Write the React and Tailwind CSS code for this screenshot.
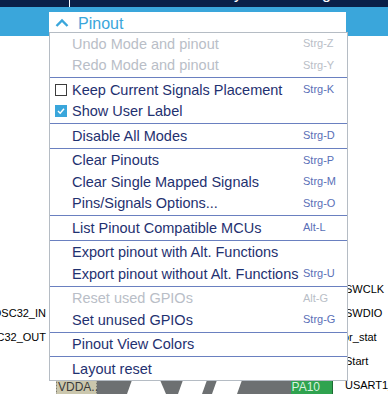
import React from 'react';

const items = [
    { label: 'Undo Mode and pinout', key: 'Strg-Z', disabled: true },
    { label: 'Redo Mode and pinout', key: 'Strg-Y', disabled: true },
    'sep',
    { label: 'Keep Current Signals Placement', key: 'Strg-K', check: 'off' },
    { label: 'Show User Label', check: 'on' },
    'sep',
    { label: 'Disable All Modes', key: 'Strg-D' },
    'sep',
    { label: 'Clear Pinouts', key: 'Strg-P' },
    { label: 'Clear Single Mapped Signals', key: 'Strg-M' },
    { label: 'Pins/Signals Options...', key: 'Strg-O' },
    'sep',
    { label: 'List Pinout Compatible MCUs', key: 'Alt-L' },
    'sep',
    { label: 'Export pinout with Alt. Functions' },
    { label: 'Export pinout without Alt. Functions', key: 'Strg-U' },
    'sep',
    { label: 'Reset used GPIOs', key: 'Alt-G', disabled: true },
    { label: 'Set unused GPIOs', key: 'Strg-G' },
    'sep',
    { label: 'Pinout View Colors' },
    'sep',
    { label: 'Layout reset' },
];

const CheckBox = ({ on }) =>
    on ? (
        <span className="flex h-[12px] w-[12px] items-center justify-center bg-[#3aa6db]">
            <svg width="10" height="10" viewBox="0 0 10 10">
                <polyline points="2,5 4.2,7.3 8,2.8" fill="none" stroke="#ffffff" strokeWidth="1.4" />
            </svg>
        </span>
    ) : (
        <span className="block h-[12px] w-[12px] border border-[#3c3c3c] bg-white"></span>
    );

const MenuRow = ({ item }) => (
    <div className="flex h-[21.5px] items-center pl-[5px]">
        <div className="flex w-[17px] shrink-0 items-center">
            {item.check && <CheckBox on={item.check === 'on'} />}
        </div>
        <div
            className={`w-[231px] shrink-0 whitespace-nowrap text-[14.5px] leading-none ${
                item.disabled ? 'text-[#b9bec7]' : 'text-[#1f3170]'
            }`}
        >
            {item.label}
        </div>
        {item.key && (
            <div
                className={`whitespace-nowrap text-[11px] leading-none ${
                    item.disabled ? 'text-[#b9bec7]' : 'text-[#5a6fb7]'
                }`}
            >
                {item.key}
            </div>
        )}
    </div>
);

const App = () => {
    return (
        <div className="relative h-[394px] w-[388px] overflow-hidden bg-white font-['Liberation_Sans',Arial,sans-serif]">
            {/* Top navy bar with clipped title glyphs */}
            <div className="relative h-[7px] overflow-hidden bg-[#0a2048]">
                <div className="absolute left-[69px] top-0 h-[7px] w-[1px] bg-white"></div>
                <span className="absolute left-[234px] top-[-14px] text-[16px] leading-none text-white">y</span>
                <span className="absolute left-[322px] top-[-14px] text-[16px] leading-none text-white">g</span>
            </div>

            {/* Blue toolbar with Pinout tab */}
            <div className="h-[29px] bg-[#3aa6db] pt-[5px]">
                <div className="ml-[49px] flex h-[24px] w-[297px] items-start bg-white pt-[3px]">
                    <svg width="14" height="10" viewBox="0 0 14 10" className="ml-[6px] mt-[3px]">
                        <polyline points="1.5,8 7,2.5 12.5,8" fill="none" stroke="#3aa6db" strokeWidth="2.4" />
                    </svg>
                    <span className="ml-[9px] text-[16px] leading-[18px] text-[#3aa6db]">Pinout</span>
                </div>
            </div>

            {/* Pinout diagram behind the menu: pin labels */}
            <div className="absolute right-[342px] top-[301px] flex flex-col items-end text-[11px] leading-[24px] text-black">
                <span className="whitespace-nowrap">OSC32_IN</span>
                <span className="whitespace-nowrap">OSC32_OUT</span>
            </div>
            <div className="absolute left-[345px] top-[277px] flex flex-col text-[11px] leading-[24px] text-black">
                <span>SWCLK</span>
                <span>SWDIO</span>
                <span className="-ml-[2px]">or_stat</span>
                <span>Start</span>
                <span className="whitespace-nowrap">USART1_TX</span>
            </div>

            {/* Chip body strip */}
            <div className="absolute left-[56px] top-[380px] h-[14px] w-[277px]">
                <svg width="277" height="14" viewBox="56 380 277 14" className="absolute left-0 top-0">
                    <rect x="97" y="380" width="194" height="14" fill="#6d7072" />
                    <polygon points="132,380 160,380 166,394 127,394" fill="#ffffff" />
                    <polygon points="183,380 207,380 202,394 178,394" fill="#ffffff" />
                    <polygon points="217,380 242,380 237,394 212,394" fill="#ffffff" />
                    <rect x="56.5" y="380.5" width="40" height="14" fill="#cbc7ad" stroke="#7f7c6c" strokeDasharray="2 1" />
                    <rect x="291" y="380" width="42" height="14" fill="#2fa34f" />
                    <line x1="332.5" y1="380" x2="332.5" y2="394" stroke="#1d6b34" />
                </svg>
                <div className="relative flex h-[14px] items-center justify-between px-[2px] text-[12px] leading-none">
                    <span className="text-[#3a3a3a]">VDDA..</span>
                    <span className="mr-[11px] text-[#d9f2df]">PA10</span>
                </div>
            </div>

            {/* Dropdown menu */}
            <div className="absolute left-[49px] top-[32px] w-[299px] border border-[#b5bcc4] bg-white">
                {items.map((item, i) =>
                    item === 'sep' ? (
                        <div key={i} className="my-[1px] h-[1px] bg-[#6a80c0]"></div>
                    ) : (
                        <MenuRow key={i} item={item} />
                    )
                )}
            </div>
        </div>
    );
};

export default App;
